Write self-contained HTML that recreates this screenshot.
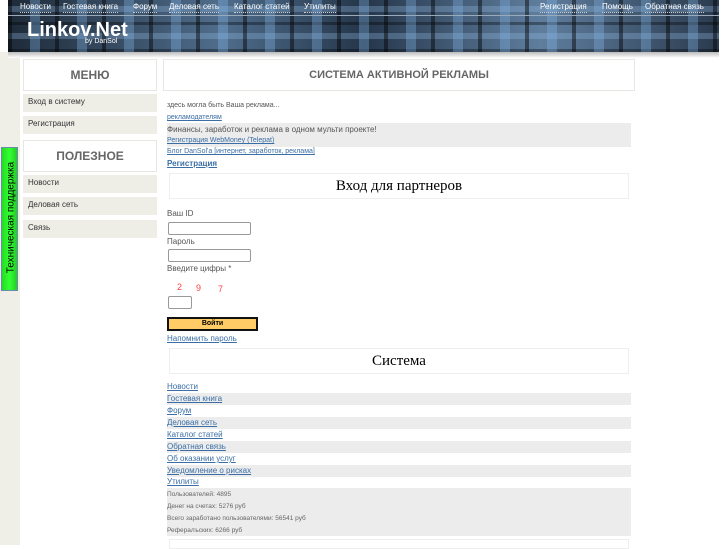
<!DOCTYPE html>
<html><head><meta charset="utf-8"><style>
*{margin:0;padding:0;box-sizing:border-box}
body{width:727px;height:545px;overflow:hidden;background:#fff;font-family:"Liberation Sans","DejaVu Sans",sans-serif;position:relative}
.a{position:absolute}
#hdr{left:8px;top:0;width:711px;height:52px;background:
repeating-linear-gradient(90deg,rgba(0,0,0,.45) 0 4px,transparent 4px 22px,rgba(130,180,230,.35) 22px 32px,transparent 32px 47px),
repeating-linear-gradient(0deg,rgba(0,0,0,.35) 0 3px,transparent 3px 13px,rgba(150,190,230,.3) 13px 19px,transparent 19px 27px),
linear-gradient(90deg,#1e2a38,#4f6d8c 30%,#25364a 50%,#5f7e9e 75%,#2a3a4e)}
.nv{top:2px;font-size:8px;color:#fff;border-bottom:1px dotted #ccc;line-height:10px}
#ln{left:8px;top:15px;width:711px;height:1px;background:#9ab}
#shadow{left:8px;top:52px;width:711px;height:6px;background:linear-gradient(#bbb,#fff)}
#lb{left:0;top:52px;width:20px;height:493px;background:#efeee7}
.bx{background:#fff;border:1px solid #e8e8e3;color:#666;font-weight:bold;text-align:center;font-size:12px}
.mi{left:23px;width:134px;height:18px;background:#eeede6;font-size:8px;color:#333;padding:3px 0 0 5px}
.t{left:167px;font-size:7px;color:#555}
.lk{color:#3a6ea5;text-decoration:underline}
.ttl{left:169px;width:460px;height:26px;border:1px solid #eee;font-family:"Liberation Serif",serif;font-size:15px;text-align:center;line-height:25px;color:#000}
.inp{left:168px;width:83px;height:13px;border:1px solid #999;border-radius:2px;background:#fff}
.row{left:167px;width:464px;height:12px;font-size:8px;line-height:12px}
.g{background:#ececec}
</style></head><body>
<div class="a" id="lb"></div>
<div class="a" id="hdr"></div>
<div class="a" id="ln"></div>
<div class="a" id="shadow"></div>
<div class="a nv" style="left:20px">Новости</div>
<div class="a nv" style="left:63px">Гостевая книга</div>
<div class="a nv" style="left:133px">Форум</div>
<div class="a nv" style="left:169px">Деловая сеть</div>
<div class="a nv" style="left:234px">Каталог статей</div>
<div class="a nv" style="left:304px">Утилиты</div>
<div class="a nv" style="left:540px">Регистрация</div>
<div class="a nv" style="left:602px">Помощь</div>
<div class="a nv" style="left:645px">Обратная связь</div>
<div class="a" style="left:27px;top:19px;font-size:20px;font-weight:bold;color:#fff">Linkov.Net</div>
<div class="a" style="left:85px;top:38px;font-size:7px;color:#fff">by DanSol</div>

<div class="a bx" style="left:23px;top:59px;width:134px;height:32px;line-height:31px">МЕНЮ</div>
<div class="a mi" style="top:94px">Вход в систему</div>
<div class="a mi" style="top:116px">Регистрация</div>
<div class="a bx" style="left:23px;top:140px;width:134px;height:32px;line-height:31px">ПОЛЕЗНОЕ</div>
<div class="a mi" style="top:175px">Новости</div>
<div class="a mi" style="top:197px">Деловая сеть</div>
<div class="a mi" style="top:220px">Связь</div>
<div class="a" style="left:1px;top:147px;width:17px;height:144px;background:linear-gradient(90deg,#22dd22,#33ff33,#22cc22);border:1px solid #6a8ab0"><div style="position:absolute;left:-63px;top:64px;width:144px;transform:rotate(-90deg);font-size:10px;color:#000;text-align:center;white-space:nowrap">Техническая поддержка</div></div>

<div class="a bx" style="left:163px;top:59px;width:472px;height:32px;line-height:31px;font-size:11px">СИСТЕМА АКТИВНОЙ РЕКЛАМЫ</div>
<div class="a t" style="top:102px;font-size:7px">здесь могла быть Ваша реклама...</div>
<div class="a t lk" style="top:114px;font-size:7px">рекламодателям</div>
<div class="a g" style="left:167px;top:123px;width:464px;height:24px"></div>
<div class="a t" style="top:125px;font-size:8px">Финансы, заработок и реклама в одном мульти проекте!</div>
<div class="a t lk" style="top:137px;font-size:7px">Регистрация WebMoney (Telepat)</div>
<div class="a t lk" style="top:148px;font-size:7px">Блог DanSol'а [интернет, заработок, реклама]</div>
<div class="a t lk" style="top:159px;font-size:8px;font-weight:bold">Регистрация</div>
<div class="a ttl" style="top:173px">Вход для партнеров</div>
<div class="a t" style="top:209px;font-size:8px">Ваш ID</div>
<div class="a inp" style="top:222px"></div>
<div class="a t" style="top:237px;font-size:8px">Пароль</div>
<div class="a inp" style="top:249px"></div>
<div class="a t" style="top:264px;font-size:8px">Введите цифры *</div>
<div class="a" style="left:177px;top:282px;font-size:9px;color:#f44">2</div>
<div class="a" style="left:196px;top:283px;font-size:9px;color:#f44">9</div>
<div class="a" style="left:218px;top:284px;font-size:9px;color:#f44">7</div>
<div class="a inp" style="top:296px;width:24px"></div>
<div class="a" style="left:167px;top:317px;width:91px;height:14px;background:#ffcc66;border:2px solid #111;font-size:7px;font-weight:bold;text-align:center;line-height:10px">Войти</div>
<div class="a t lk" style="top:334px;font-size:8px">Напомнить пароль</div>
<div class="a ttl" style="top:348px">Система</div>
<div class="a row lk" style="top:381px">Новости</div>
<div class="a row g" style="top:393px"><span class="lk">Гостевая книга</span></div>
<div class="a row lk" style="top:405px">Форум</div>
<div class="a row g" style="top:417px"><span class="lk">Деловая сеть</span></div>
<div class="a row lk" style="top:429px">Каталог статей</div>
<div class="a row g" style="top:441px"><span class="lk">Обратная связь</span></div>
<div class="a row lk" style="top:453px">Об оказании услуг</div>
<div class="a row g" style="top:465px"><span class="lk">Уведомление о рисках</span></div>
<div class="a row lk" style="top:476px">Утилиты</div>
<div class="a g" style="left:167px;top:488px;width:464px;height:48px;font-size:6.5px;color:#666;line-height:12px;padding-top:1px">Пользователей: 4895<br>Денег на счетах: 5276 руб<br>Всего заработано пользователями: 56541 руб<br>Рефералъских: 6266 руб</div>
<div class="a" style="left:169px;top:539px;width:460px;height:10px;border:1px solid #eee"></div>
</body></html>
